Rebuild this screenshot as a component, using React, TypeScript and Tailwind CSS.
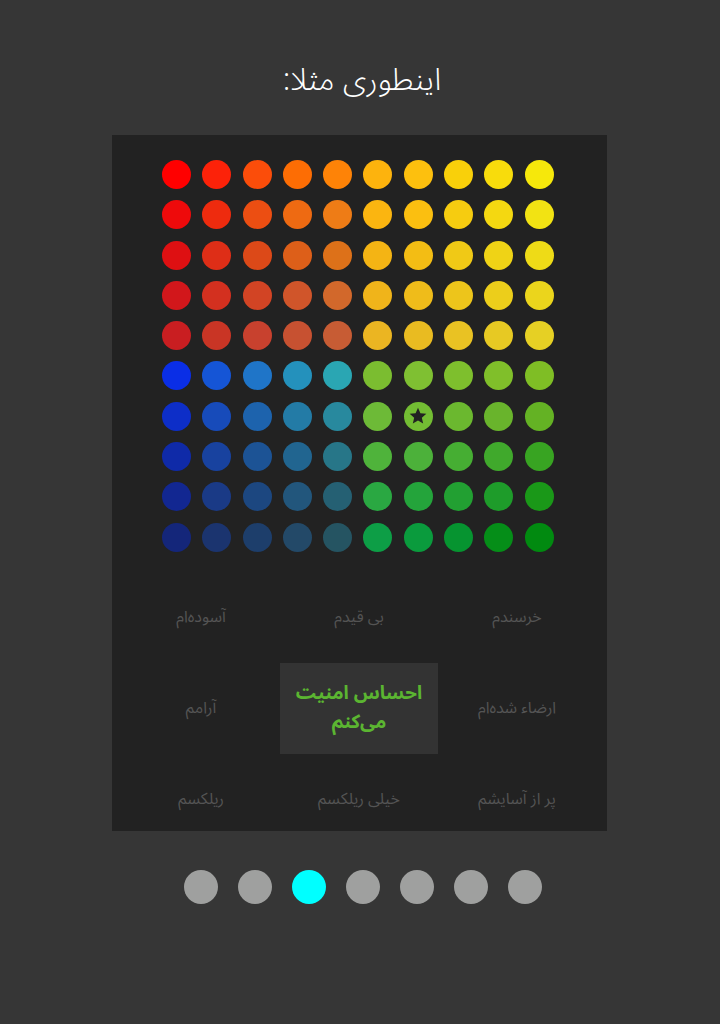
const colors: string[][] = [
  ["#ff0000", "#fc2209", "#fb4d0a", "#fd6d04", "#fe8307", "#fdb30d", "#fdc00e", "#f9d00a", "#f8dc0c", "#f6e80b"],
  ["#ee0a0b", "#ee2b0e", "#ec4e12", "#ee6a12", "#ee7c16", "#fbb510", "#fbbf10", "#f6cc10", "#f4d811", "#f2e313"],
  ["#de1012", "#de2e17", "#dc4918", "#dd5f19", "#dd7119", "#f4b414", "#f3bd14", "#f0c916", "#efd316", "#eedb17"],
  ["#d2171b", "#d3301f", "#d24424", "#d0552a", "#d2682b", "#f0b41a", "#efbc1a", "#edc51b", "#ecce1b", "#ebd51c"],
  ["#c91e21", "#c93525", "#c8412e", "#c75131", "#c75c34", "#ebb522", "#e9bb21", "#e9c223", "#e7c923", "#e6d024"],
  ["#0a2ee6", "#1555d6", "#1f75c8", "#2491bc", "#2aa6b3", "#7bbd30", "#7fc032", "#7ebf2d", "#80bf2a", "#7fbe25"],
  ["#0d2ec8", "#174bba", "#1d63ad", "#237ba6", "#28899e", "#6dba37", "#73bd33", "#6bb82f", "#69b42c", "#64b224"],
  ["#0f2aa8", "#18429f", "#1c5395", "#216590", "#277688", "#4fb33b", "#4cb13a", "#46ae33", "#40a92c", "#38a422"],
  ["#122791", "#1a3a86", "#1c4780", "#22567c", "#256073", "#2aa842", "#24a43b", "#22a032", "#1e9c2a", "#1a9818"],
  ["#14267a", "#1b346f", "#1d3e6b", "#234968", "#255462", "#0d9e46", "#0a9b3d", "#069430", "#058e18", "#018a10"],
];

const labels = [
  "خرسندم",
  "بی قیدم",
  "آسوده‌ام",
  "ارضاء شده‌ام",
  null,
  "آرامم",
  "پر از آسایشم",
  "خیلی ریلکسم",
  "ریلکسم",
];

const font = { fontFamily: '"Noto Sans Arabic", "DejaVu Sans", "Noto Sans", sans-serif' };

export default function App() {
  return (
    <div className="h-[1024px] w-full bg-[#363636] flex flex-col items-center pt-[58px]" style={font}>
      <div className="h-[44px] leading-[44px] text-[31px] text-white font-light ml-[4px]" dir="rtl">
        اینطوری مثلا:
      </div>

      <div className="mt-[33px] w-[495px] h-[696px] bg-[#222222] overflow-hidden mr-[1px]">
        <div className="pt-[25px] pl-[50px] grid grid-cols-[repeat(10,29px)] gap-x-[11.3px] gap-y-[11.3px]">
          {colors.map((row, r) =>
            row.map((c, i) => (
              <div
                key={`${r}-${i}`}
                className="size-[29px] rounded-full flex items-center justify-center"
                style={{ backgroundColor: c }}
              >
                {r === 6 && i === 6 && (
                  <svg viewBox="0 0 24 24" className="size-[20px]" fill="#222222">
                    <path d="M12 2.2l2.9 6.6 7.1.6-5.4 4.7 1.6 7-6.2-3.7-6.2 3.7 1.6-7L2 9.4l7.1-.6z" />
                  </svg>
                )}
              </div>
            ))
          )}
        </div>

        <div
          dir="rtl"
          className="mt-[20px] pr-[11px] grid grid-cols-[158px_158px_158px] grid-rows-[91px_91px_91px]"
        >
          {labels.map((l, i) =>
            l === null ? (
              <div
                key={i}
                className="bg-[#333333] flex items-center justify-center text-center text-[19px] leading-[29px] font-bold text-[#5bb531] px-2"
              >
                <p>
                  احساس امنیت
                  <br />
                  می‌کنم
                </p>
              </div>
            ) : (
              <div key={i} className="flex items-center justify-center text-[16px] text-[#545454]">
                {l}
              </div>
            )
          )}
        </div>
      </div>

      <div className="mt-[39px] flex gap-5 ml-[6px]">
        {[0, 1, 2, 3, 4, 5, 6].map((i) => (
          <div
            key={i}
            className={i === 2 ? "size-[34px] rounded-full bg-[#00ffff]" : "size-[34px] rounded-full bg-[#9fa09f]"}
          />
        ))}
      </div>
    </div>
  );
}
